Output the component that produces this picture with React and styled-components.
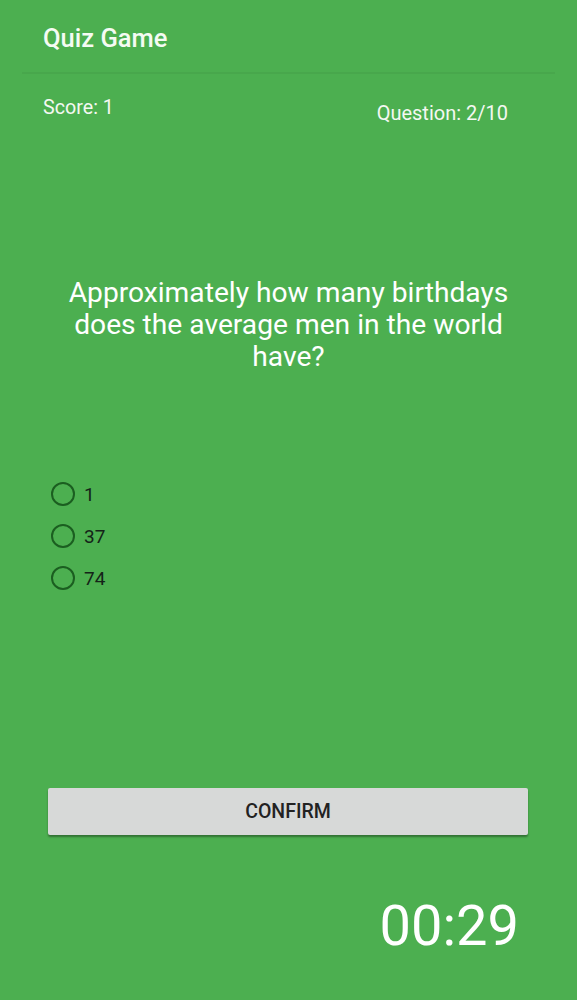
import React, { useState } from "react";
import styled, { createGlobalStyle } from "styled-components";

const Global = createGlobalStyle`
  html, body { margin: 0; padding: 0; }
  body { background: #4caf50; font-family: Roboto, "Noto Sans", sans-serif; }
`;

const Page = styled.div`
  width: 577px;
  height: 1000px;
  background: #4caf50;
  display: flex;
  flex-direction: column;
  box-sizing: border-box;
  overflow: hidden;
`;

const Header = styled.header`
  height: 74px;
  margin: 0 22px 0 22px;
  padding: 0 21px;
  display: flex;
  align-items: flex-start;
  border-bottom: 2px solid #48a74c;
  box-sizing: border-box;
`;

const Title = styled.h1`
  margin: 23px 0 0;
  font-size: 25.5px;
  font-weight: 500;
  color: #f5fbf3;
  line-height: 30px;
`;

const StatsRow = styled.div`
  display: flex;
  justify-content: space-between;
  align-items: flex-start;
  padding: 0 69px 0 43px;
`;

const Stat = styled.span`
  font-size: ${(p) => p.$size}px;
  color: #f4f8f2;
  margin-top: ${(p) => p.$top}px;
  line-height: 24px;
`;

const Question = styled.p`
  margin: 152px 48px 0;
  text-align: center;
  font-size: 28.2px;
  line-height: 32px;
  color: #ffffff;
`;

const Options = styled.div`
  margin: 109px 0 0 51px;
  display: flex;
  flex-direction: column;
  gap: 18px;
`;

const Option = styled.label`
  display: flex;
  align-items: center;
  gap: 9px;
  height: 24px;
  font-size: 19px;
  color: #142318;
  cursor: pointer;
`;

const Radio = styled.span`
  width: 20px;
  height: 20px;
  border-radius: 50%;
  border: 2px solid #1b5e20;
  box-sizing: content-box;
  display: flex;
  align-items: center;
  justify-content: center;
  &::after {
    content: "";
    width: 10px;
    height: 10px;
    border-radius: 50%;
    background: ${(p) => (p.$checked ? "#1b5e20" : "transparent")};
  }
`;

const Spacer = styled.div`
  flex: 1;
`;

const ConfirmButton = styled.button`
  margin: 0 49px 0 48px;
  height: 47px;
  border: none;
  border-radius: 2px;
  background: #d7d9d8;
  box-shadow: 0 2px 2px rgba(0, 0, 0, 0.35);
  font-family: Roboto, sans-serif;
  font-size: 19.5px;
  font-weight: 500;
  color: #222;
`;

const Timer = styled.div`
  margin: 58px 58px 41px 0;
  align-self: flex-end;
  font-size: 56px;
  line-height: 66px;
  color: #ffffff;
`;

export default function App() {
  const [choice, setChoice] = useState(null);
  const answers = ["1", "37", "74"];
  return (
    <Page>
      <Global />
      <Header>
        <Title>Quiz Game</Title>
      </Header>
      <StatsRow>
        <Stat $top={22} $size={19.7}>Score: 1</Stat>
        <Stat $top={27} $size={20}>Question: 2/10</Stat>
      </StatsRow>
      <Question>
        Approximately how many birthdays does the average men in the world have?
      </Question>
      <Options>
        {answers.map((a) => (
          <Option key={a} onClick={() => setChoice(a)}>
            <Radio $checked={choice === a} />
            {a}
          </Option>
        ))}
      </Options>
      <Spacer />
      <ConfirmButton>CONFIRM</ConfirmButton>
      <Timer>00:29</Timer>
    </Page>
  );
}
